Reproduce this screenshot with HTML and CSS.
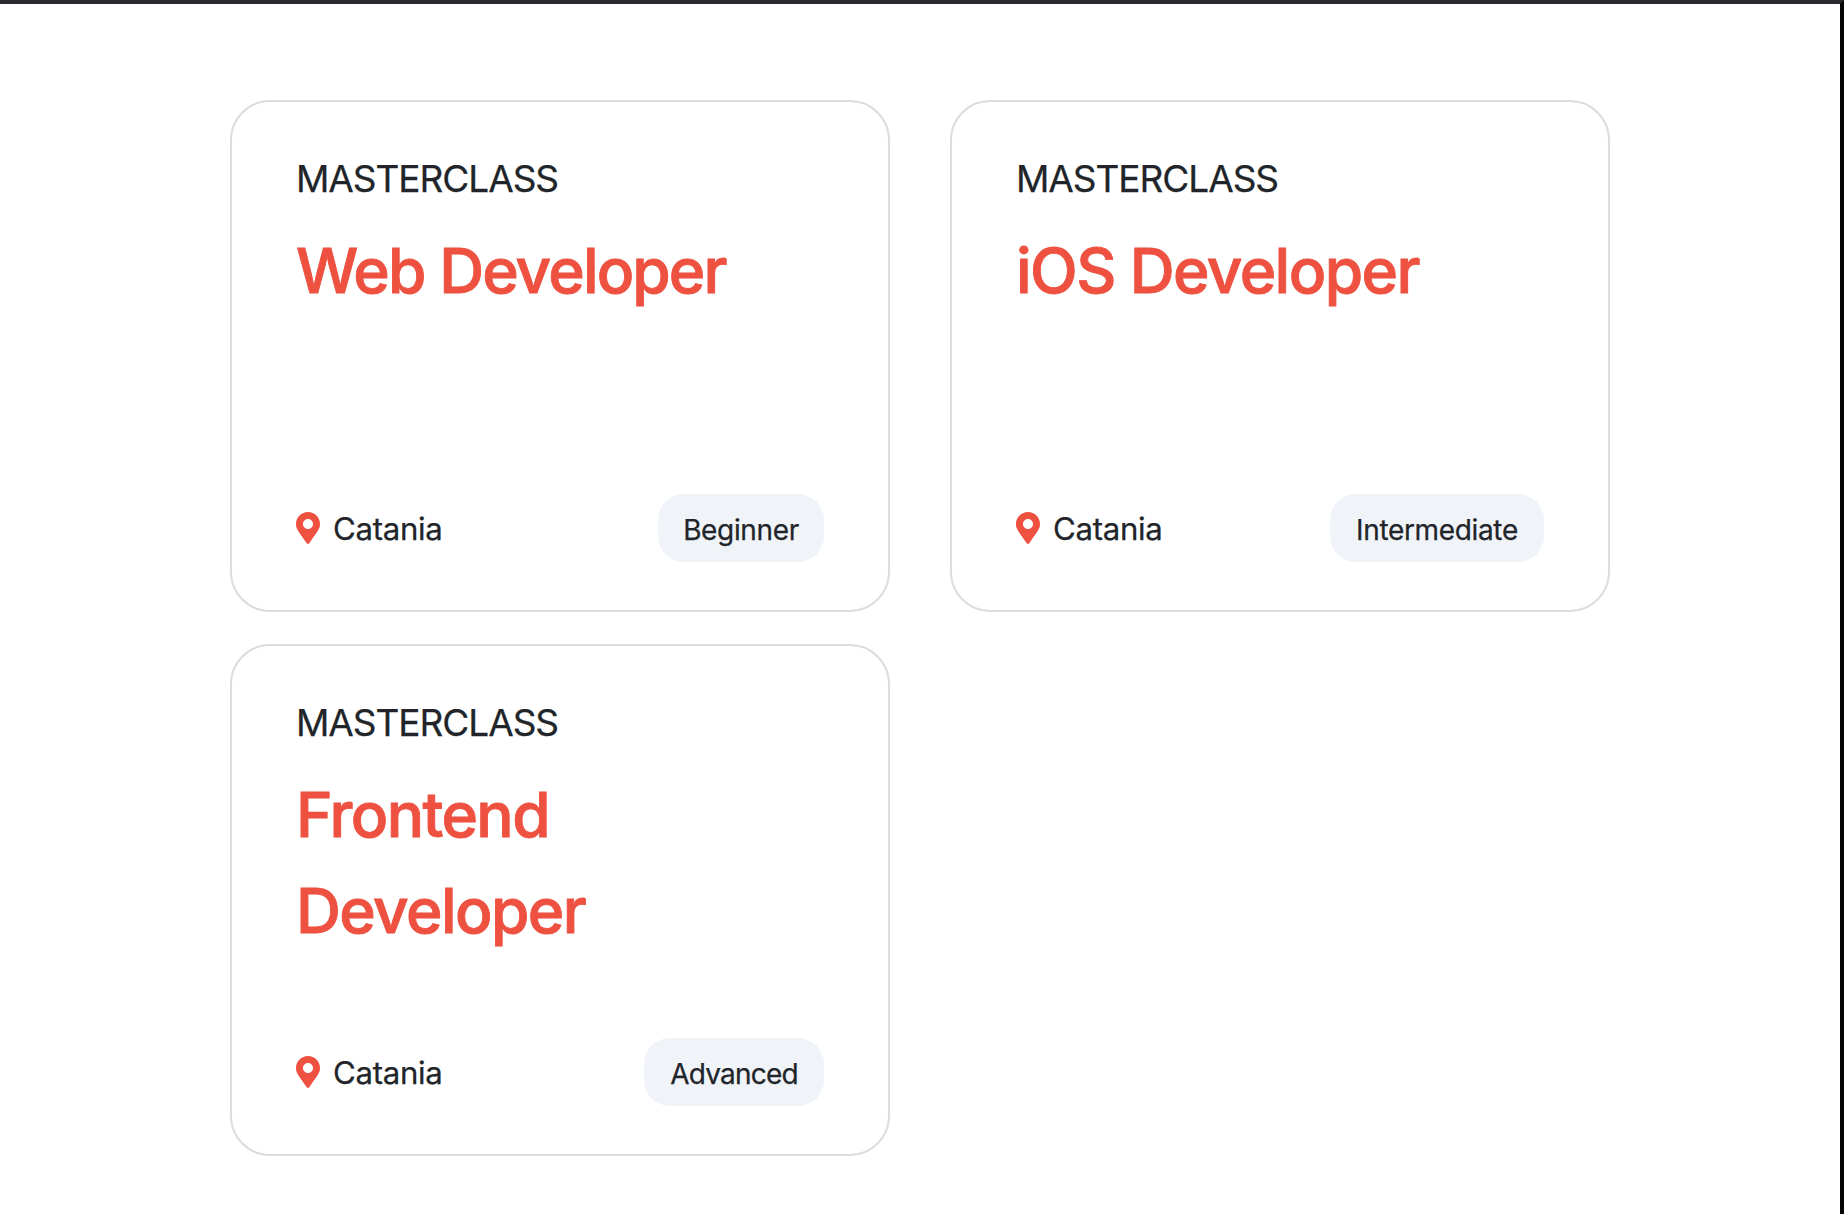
FILE: index.html
```html
<!DOCTYPE html>
<html lang="en">
<head>
<meta charset="utf-8">
<title>Masterclass</title>
<link rel="stylesheet" href="styles.css">
</head>
<body>
<svg width="0" height="0" class="sprite" aria-hidden="true">
  <symbol id="pin" viewBox="0 0 384 512"><path d="M172.268 501.67C26.97 291.031 0 269.413 0 192 0 85.961 85.961 0 192 0s192 85.961 192 192c0 77.413-26.97 99.031-172.268 309.67-9.535 13.774-29.93 13.773-39.464 0zM192 272c44.183 0 80-35.817 80-80s-35.817-80-80-80-80 35.817-80 80 35.817 80 80 80z"/></symbol>
</svg>
<main class="courses">
  <article class="card">
    <p class="label">MASTERCLASS</p>
    <h2 class="title title-web">Web Developer</h2>
    <div class="meta">
      <span class="place"><svg class="pin"><use href="#pin"/></svg><span class="city">Catania</span></span>
      <span class="level">Beginner</span>
    </div>
  </article>
  <article class="card">
    <p class="label">MASTERCLASS</p>
    <h2 class="title">iOS Developer</h2>
    <div class="meta">
      <span class="place"><svg class="pin"><use href="#pin"/></svg><span class="city">Catania</span></span>
      <span class="level level-intermediate">Intermediate</span>
    </div>
  </article>
  <article class="card">
    <p class="label">MASTERCLASS</p>
    <h2 class="title">Frontend<br>Developer</h2>
    <div class="meta">
      <span class="place"><svg class="pin"><use href="#pin"/></svg><span class="city">Catania</span></span>
      <span class="level level-advanced">Advanced</span>
    </div>
  </article>
</main>
</body>
</html>
```

FILE: styles.css
```css
* { box-sizing: border-box; }

body {
  margin: 0;
  height: 1214px;
  overflow: hidden;
  border-top: 4px solid #2b292e;
  border-right: 4px solid #050505;
  background: #fff;
  color: #212529;
  font-family: Inter, "Liberation Sans", sans-serif;
  -webkit-text-stroke: 0.25px currentColor;
}

.sprite { display: none; }

.courses {
  display: grid;
  grid-template-columns: 660px 660px;
  grid-auto-rows: 512px;
  gap: 32px 60px;
  padding: 96px 0 0 230px;
}

.card {
  display: flex;
  flex-direction: column;
  padding: 48px 64px;
  border: 2px solid #dcdcdc;
  border-radius: 40px;
}

.label {
  margin: 0 0 15px;
  font-size: 37px;
  line-height: 58px;
  letter-spacing: -1.05px;
}

.title {
  margin: 0;
  color: #ee5140;
  font-size: 62.2px;
  font-weight: 500;
  line-height: 96px;
  letter-spacing: -1.6px;
  -webkit-text-stroke: 0.9px currentColor;
}

.title-web { letter-spacing: -1.9px; }

.meta {
  display: flex;
  align-items: center;
  justify-content: space-between;
  margin-top: auto;
}

.place {
  display: flex;
  align-items: center;
  gap: 13px;
  font-size: 31.2px;
  line-height: 48px;
  letter-spacing: -0.3px;
}

.city { padding-top: 1px; }

.pin {
  width: 24px;
  height: 32px;
  fill: #ee5140;
}

.level {
  width: 166px;
  height: 68px;
  padding-top: 4px;
  border-radius: 26px;
  background: #f0f4f9;
  font-size: 28px;
  line-height: 65px;
  letter-spacing: -0.35px;
  text-align: center;
}

.level-intermediate { width: 214px; }

.level-advanced {
  width: 180px;
  letter-spacing: -0.8px;
}
```
